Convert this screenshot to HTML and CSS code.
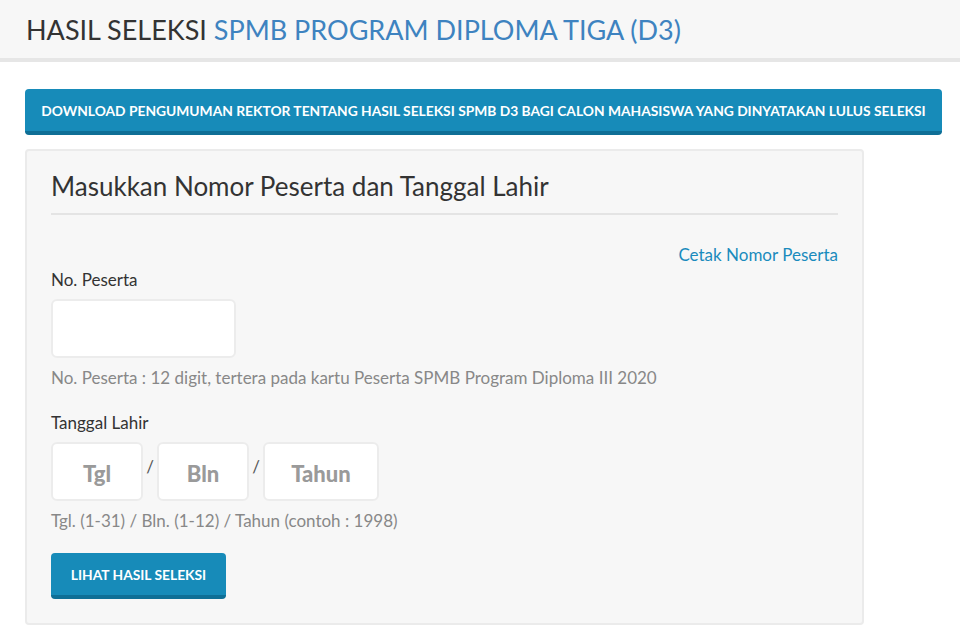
FILE: index.html
```html
<!DOCTYPE html>
<html lang="id">

<head>
    <meta charset="UTF-8">
    <meta name="viewport" content="width=device-width, initial-scale=1.0">
    <title>Hasil Seleksi SPMB D3</title>
    <link rel="stylesheet" href="styles.css">
</head>

<body>
    <div class="page-header">
        <h1>HASIL SELEKSI <span class="accent">SPMB PROGRAM DIPLOMA TIGA (D3)</span></h1>
    </div>

    <div class="content">
        <a class="btn btn-wide" href="#">Download Pengumuman Rektor tentang Hasil Seleksi SPMB D3 bagi Calon Mahasiswa yang Dinyatakan Lulus Seleksi</a>

        <div class="panel">
            <h2 class="panel-title">Masukkan Nomor Peserta dan Tanggal Lahir</h2>

            <div class="print-link">
                <a href="#">Cetak Nomor Peserta</a>
            </div>

            <form class="form">
                <label class="label" for="noPeserta">No. Peserta</label>
                <input class="field field-peserta" id="noPeserta" type="text">
                <p class="help">No. Peserta : 12 digit, tertera pada kartu Peserta SPMB Program Diploma III 2020</p>

                <label class="label" for="tgl">Tanggal Lahir</label>
                <div class="date-row">
                    <input class="field field-date" id="tgl" type="text" placeholder="Tgl">
                    <span class="sep">/</span>
                    <input class="field field-date" type="text" placeholder="Bln">
                    <span class="sep">/</span>
                    <input class="field field-year" type="text" placeholder="Tahun">
                </div>
                <p class="help">Tgl. (1-31) / Bln. (1-12) / Tahun (contoh : 1998)</p>

                <button class="btn btn-submit" type="button">Lihat Hasil Seleksi</button>
            </form>
        </div>
    </div>
</body>

</html>
```

FILE: styles.css
```css
body {
    margin: 0;
    font-family: Lato, "Open Sans", sans-serif;
    color: #333;
    background: #fff;
}

.page-header {
    background: #f7f7f7;
    border-bottom: 4px solid #e6e6e6;
    height: 58px;
    padding: 0 26px;
    display: flex;
    align-items: center;
}

.page-header h1 {
    margin: 0;
    font-size: 27px;
    font-weight: normal;
    color: #333;
}

.accent {
    color: #3e83c0;
}

.content {
    padding: 27px 18px 0 25px;
}

.btn {
    display: block;
    box-sizing: border-box;
    background: #178bb9;
    border: none;
    border-bottom: 4px solid #0f6f96;
    border-radius: 4px;
    color: #fff;
    font-family: inherit;
    font-weight: bold;
    font-size: 13.8px;
    text-transform: uppercase;
    text-decoration: none;
    text-align: center;
    cursor: pointer;
}

.btn-wide {
    width: 917px;
    height: 46px;
    line-height: 43px;
}

.panel {
    box-sizing: border-box;
    width: 839px;
    margin-top: 14px;
    padding: 14px 24px 24px;
    background: #f7f7f7;
    border: 2px solid #ebebeb;
    border-radius: 4px;
}

.panel-title {
    margin: 0;
    padding-bottom: 6px;
    border-bottom: 2px solid #e4e4e4;
    font-size: 26px;
    font-weight: normal;
    line-height: 42px;
}

.print-link {
    text-align: right;
    margin-top: 29px;
    font-size: 17px;
}

.print-link a {
    color: #1a8bbd;
    text-decoration: none;
}

.form {
    display: flex;
    flex-direction: column;
    align-items: flex-start;
}

.label {
    font-size: 17px;
    margin-top: 4px;
    margin-bottom: 9px;
}

.field {
    box-sizing: border-box;
    height: 59px;
    background: #fff;
    border: 2px solid #ececec;
    border-radius: 6px;
    padding: 4px 0 0;
    font-family: inherit;
    font-size: 22px;
    font-weight: 900;
    text-align: center;
    color: #555;
    outline: none;
}

.field::placeholder {
    color: #9a9a9a;
    font-weight: 900;
}

.field-peserta {
    width: 185px;
}

.date-row {
    display: flex;
    align-items: center;
}

.field-date {
    width: 92px;
}

.field-year {
    width: 116px;
}

.sep {
    width: 14px;
    text-align: center;
    font-size: 17px;
    color: #555;
    margin-top: -10px;
}

.help {
    margin: 9px 0 20px;
    font-size: 17px;
    color: #888;
}

.btn-submit {
    width: 175px;
    height: 46px;
    margin-top: 2px;
}
```
